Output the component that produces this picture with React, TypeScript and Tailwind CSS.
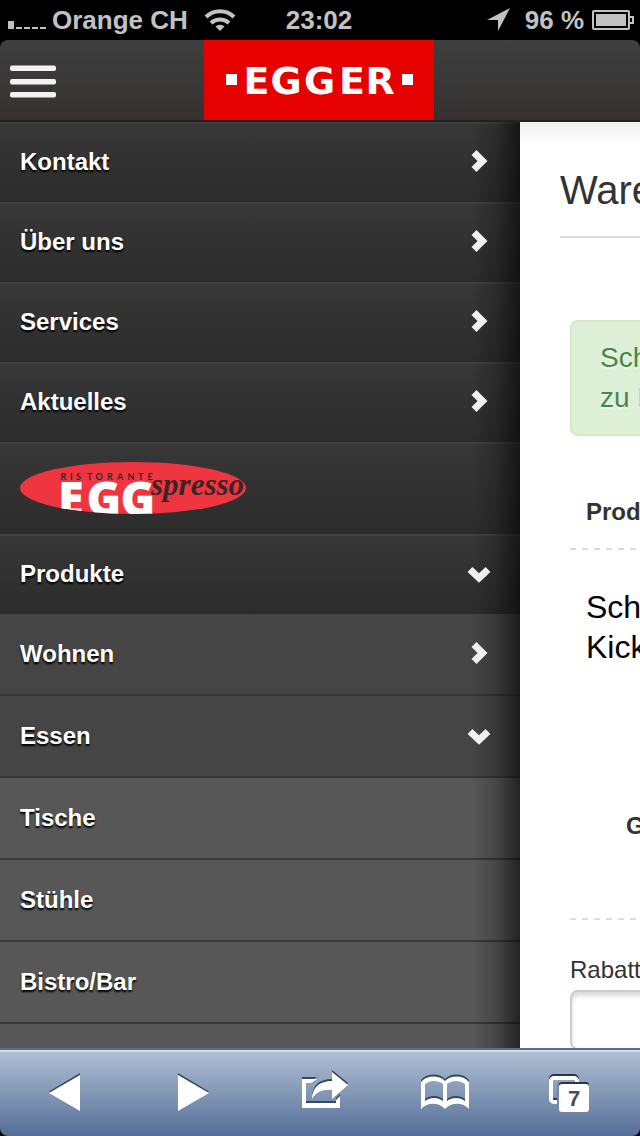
import React from "react";

type Level = "top" | "sub" | "leaf";
type Arrow = "right" | "down" | "none";

const levelClass: Record<Level, string> = {
  top: "h-20 border-t-2 border-[#414141] bg-linear-to-b from-[#373737] to-[#2c2c2c] pb-0.5",
  sub: "h-[82px] border-b-2 border-[#363636] bg-[#454545]",
  leaf: "h-[82px] border-b-2 border-[#383838] bg-[#575757]",
};

const items: { label: string; level: Level; arrow: Arrow }[] = [
  { label: "Kontakt", level: "top", arrow: "right" },
  { label: "Über uns", level: "top", arrow: "right" },
  { label: "Services", level: "top", arrow: "right" },
  { label: "Aktuelles", level: "top", arrow: "right" },
  { label: "EGGspresso", level: "top", arrow: "none" },
  { label: "Produkte", level: "top", arrow: "down" },
  { label: "Wohnen", level: "sub", arrow: "right" },
  { label: "Essen", level: "sub", arrow: "down" },
  { label: "Tische", level: "leaf", arrow: "none" },
  { label: "Stühle", level: "leaf", arrow: "none" },
  { label: "Bistro/Bar", level: "leaf", arrow: "none" },
];

function Chevron({ dir }: { dir: Arrow }) {
  if (dir === "none") return null;
  return (
    <svg width="26" height="26" viewBox="0 0 26 26" fill="none" stroke="#f0f0f0" strokeWidth="7" className="relative z-10" aria-hidden="true">
      {dir === "right" ? <path d="M8 3.500L16.500 12l-8.500 8.500" /> : <path d="M4 8.500L13 17l9-8.500" />}
    </svg>
  );
}

function EggspressoLogo() {
  return (
    <svg width="228" height="52" viewBox="0 0 228 52" role="img" aria-label="Ristorante EGGspresso">
      <defs>
        <clipPath id="oval">
          <ellipse cx="113" cy="26" rx="113" ry="26" />
        </clipPath>
      </defs>
      <ellipse cx="113" cy="26" rx="113" ry="26" fill="#ef353f" />
      <g clipPath="url(#oval)">
        <text x="38 66.500 100.500" y="54" fontFamily="Open Sans, sans-serif" fontWeight="800" fontSize="47" fill="#fff">EGG</text>
      </g>
      <text x="40.500 50 56 67 75.500 87 97 107.500 118 127.500" y="18" fontFamily="Lato, sans-serif" fontWeight="700" fontSize="9" fill="#3a2528">RISTORANTE</text>
      <text x="131" y="33" fontFamily="Liberation Serif, serif" fontStyle="italic" fontWeight="700" fontSize="31" fill="#3a2528">spresso</text>
    </svg>
  );
}

function StatusBar() {
  return (
    <div className="flex h-10 shrink-0 items-center bg-black pr-1.5 pl-2 text-[26px] leading-10 font-bold text-[#c2c2c2]">
      <div className="flex flex-1 items-center">
        <svg width="38" height="20" viewBox="0 0 38 20" fill="#c2c2c2" className="mr-1.5" aria-hidden="true">
          <path d="M0 11h6v8H0zM8 17h6v2H8zM16 17h6v2h-6zM24 17h6v2h-6zM32 17h6v2h-6z" />
        </svg>
        <span>Orange CH</span>
        <svg width="32" height="24" viewBox="0 0 32 24" fill="none" stroke="#c2c2c2" strokeWidth="4" className="ml-4" aria-hidden="true">
          <path d="M2 9a20 20 0 0 1 28 0M7 15a13 13 0 0 1 18 0" />
          <path d="M16 23l-4.500-4.500a6.500 6.500 0 0 1 9 0z" fill="#c2c2c2" stroke="none" />
        </svg>
      </div>
      <span className="mr-1">23:02</span>
      <div className="flex flex-1 items-center justify-end">
        <svg width="24" height="24" viewBox="0 0 24 24" fill="#c2c2c2" className="mr-3.5" aria-hidden="true">
          <path d="M23 0L0 12h11v11z" />
        </svg>
        <span>96 %</span>
        <svg width="42" height="20" viewBox="0 0 42 20" className="ml-2" aria-hidden="true">
          <rect x="1" y="1" width="36" height="18" rx="1" fill="none" stroke="#c2c2c2" strokeWidth="2" />
          <rect x="4" y="4" width="30" height="12" fill="#c2c2c2" />
          <path d="M38 7h3v6h-3" fill="none" stroke="#c2c2c2" strokeWidth="2" />
        </svg>
      </div>
    </div>
  );
}

function Header() {
  return (
    <div className="shrink-0 bg-black">
      <header className="grid h-[82px] grid-cols-[204px_230px_1fr] rounded-t-lg border-b-2 border-[#232222] bg-linear-to-b from-[#3e3f40] to-[#363130]">
        <button type="button" aria-label="Menü" className="flex items-center pl-2.5">
          <svg width="46" height="36" viewBox="0 0 46 36" fill="#f3f1f1" aria-hidden="true">
            <rect y="3.500" width="46" height="5.500" rx="2" />
            <rect y="17" width="46" height="5.500" rx="2" />
            <rect y="30" width="46" height="5.500" rx="2" />
          </svg>
        </button>
        <a href="#home" aria-label="Egger" className="block bg-[#e60000]">
          <svg width="230" height="80" viewBox="0 0 230 80" fill="#fff" aria-hidden="true">
            <rect x="22" y="34" width="11" height="11" />
            <text x="39.500 66.500 100 135 161.500" y="54" fontFamily="DejaVu Sans, sans-serif" fontWeight="700" fontSize="38">EGGER</text>
            <rect x="198" y="34" width="11" height="11" />
          </svg>
        </a>
      </header>
    </div>
  );
}

function Menu() {
  return (
    <nav className="relative w-[520px] shrink-0 overflow-hidden bg-[#575757]">
      <ul>
        {items.map((item) => (
          <li key={item.label}>
            {item.label === "EGGspresso" ? (
              <a href="#eggspresso" className="flex h-[92px] items-start border-t-2 border-[#414141] bg-linear-to-b from-[#373737] to-[#2c2c2c] px-5 pt-[18px]">
                <EggspressoLogo />
              </a>
            ) : (
              <a
                href={"#" + item.label}
                className={"flex items-center justify-between pr-7 pl-5 text-2xl font-bold text-white [text-shadow:0_2px_2px_#000] " + levelClass[item.level]}
              >
                {item.label}
                <Chevron dir={item.arrow} />
              </a>
            )}
          </li>
        ))}
      </ul>
      <div className="pointer-events-none absolute inset-y-0 right-0 w-12 bg-linear-to-r from-transparent via-black/20 to-black/60" />
    </nav>
  );
}

function Cart() {
  return (
    <main className="min-w-0 flex-1 overflow-hidden bg-white bg-linear-to-b from-[#f0f0f0] to-white to-[24px] text-[#333]">
      <div className="w-screen px-10 whitespace-nowrap">
        <h1 className="h-[116px] border-b-2 border-[#dcdcdc] pt-11 text-[40px] leading-12">Ware</h1>
        <div className="px-2.5">
          <p className="mt-[82px] rounded-lg border-2 border-[#d6e9c6] bg-[#dff0d8] px-7 py-4 text-[28px] leading-10 text-[#468847] [text-shadow:0_2px_0_rgba(255,255,255,0.5)]">
            Sch
            <br />
            zu I
          </p>
          <table className="mt-[56px] w-full text-left">
            <thead>
              <tr>
                <th className="h-14 pb-4 pl-4 text-2xl font-bold">Prod</th>
              </tr>
            </thead>
            <tbody>
              <tr>
                <td className="h-[370px] bg-[repeating-linear-gradient(to_right,#dcdcdc_0_6px,transparent_6px_12px)] bg-[length:100%_2px] bg-top bg-no-repeat pt-[39px] pl-4 align-top text-[32px] leading-10 text-black">
                  Sch
                  <br />
                  Kick
                  <div className="pt-[131px] pl-10 text-2xl leading-[56px] font-bold text-[#333]">G</div>
                </td>
              </tr>
            </tbody>
          </table>
          <div className="h-0.5 bg-[repeating-linear-gradient(to_right,#dcdcdc_0_6px,transparent_6px_12px)]" />
          <label htmlFor="rabatt" className="block pt-[30px] text-2xl leading-10">
            Rabatt
          </label>
          <input id="rabatt" type="text" className="block h-[60px] w-full rounded-lg border-2 border-[#ccc] bg-white px-3 shadow-[inset_0_4px_4px_rgba(0,0,0,0.15)]" />
        </div>
      </div>
    </main>
  );
}

const toolButton = "flex items-center justify-center";
const sharePath =
  "M0 8h15l-6 4H4v20h30v-3l4-4v12H0zM30 1l16 13-16 14v-9c-9-1-16 2-20 9 0-12 8-18 20-18z";
const bookPath =
  "M0 9C6 2 18 2 24 8C30 2 42 2 48 9V36C42 29 30 29 24 36C18 29 6 29 0 36ZM4 11V28C9 24 17 24 22 28V11C17 7 9 7 4 11ZM26 11V28C31 24 39 24 44 28V11C39 7 31 7 26 11Z";

function Toolbar() {
  return (
    <div className="shrink-0 bg-black">
      <footer className="grid h-[88px] grid-cols-[129fr_129fr_134fr_106fr_142fr] rounded-b-lg border-t-2 border-[#566f8b] bg-linear-to-b from-[#b1bfd6] via-[#8398b6] to-[#566f98] shadow-[inset_0_2px_0_#d3dae8]">
        <button type="button" aria-label="Zurück" className={toolButton}>
          <svg width="32" height="40" viewBox="0 0 32 40" aria-hidden="true">
            <path d="M31 0L0 18.500 31 36z" fill="#37475c" />
            <path d="M31 2L0 20l31 18z" fill="#fff" />
          </svg>
        </button>
        <button type="button" aria-label="Vorwärts" className={toolButton}>
          <svg width="32" height="40" viewBox="0 0 32 40" aria-hidden="true">
            <path d="M0 0l31 18.500L0 36z" fill="#37475c" />
            <path d="M0 2l31 18L0 38z" fill="#fff" />
          </svg>
        </button>
        <button type="button" aria-label="Teilen" className={toolButton}>
          <svg width="46" height="46" viewBox="0 0 46 46" aria-hidden="true">
            <path d={sharePath} fill="#37475c" transform="translate(0 -1)" />
            <path d={sharePath} fill="#fff" transform="translate(0 1)" />
          </svg>
        </button>
        <button type="button" aria-label="Lesezeichen" className={toolButton}>
          <svg width="48" height="40" viewBox="0 0 48 40" fillRule="evenodd" aria-hidden="true">
            <path d={bookPath} fill="#37475c" transform="translate(0 -2)" />
            <path d={bookPath} fill="#fff" />
          </svg>
        </button>
        <button type="button" aria-label="7 Seiten" className={toolButton}>
          <svg width="40" height="40" viewBox="0 0 40 40" aria-hidden="true">
            <rect x="2" y="3" width="26" height="24" rx="3" fill="none" stroke="#2c3540" strokeWidth="4" />
            <rect x="2" y="5" width="26" height="24" rx="3" fill="none" stroke="#fff" strokeWidth="4" />
            <rect x="8" y="9" width="32" height="26" rx="3" fill="#7288a9" />
            <rect x="10" y="9" width="30" height="20" rx="3" fill="#2c3540" />
            <rect x="10" y="11" width="30" height="28" rx="3" fill="#fff" />
            <text x="25" y="33" textAnchor="middle" fontFamily="Liberation Sans, sans-serif" fontWeight="700" fontSize="22" fill="#3f4f68">7</text>
          </svg>
        </button>
      </footer>
    </div>
  );
}

export default function App() {
  return (
    <div className="flex h-screen flex-col overflow-hidden bg-white font-['Liberation_Sans',sans-serif]">
      <StatusBar />
      <Header />
      <div className="flex min-h-0 flex-1 overflow-hidden">
        <Menu />
        <Cart />
      </div>
      <Toolbar />
    </div>
  );
}
